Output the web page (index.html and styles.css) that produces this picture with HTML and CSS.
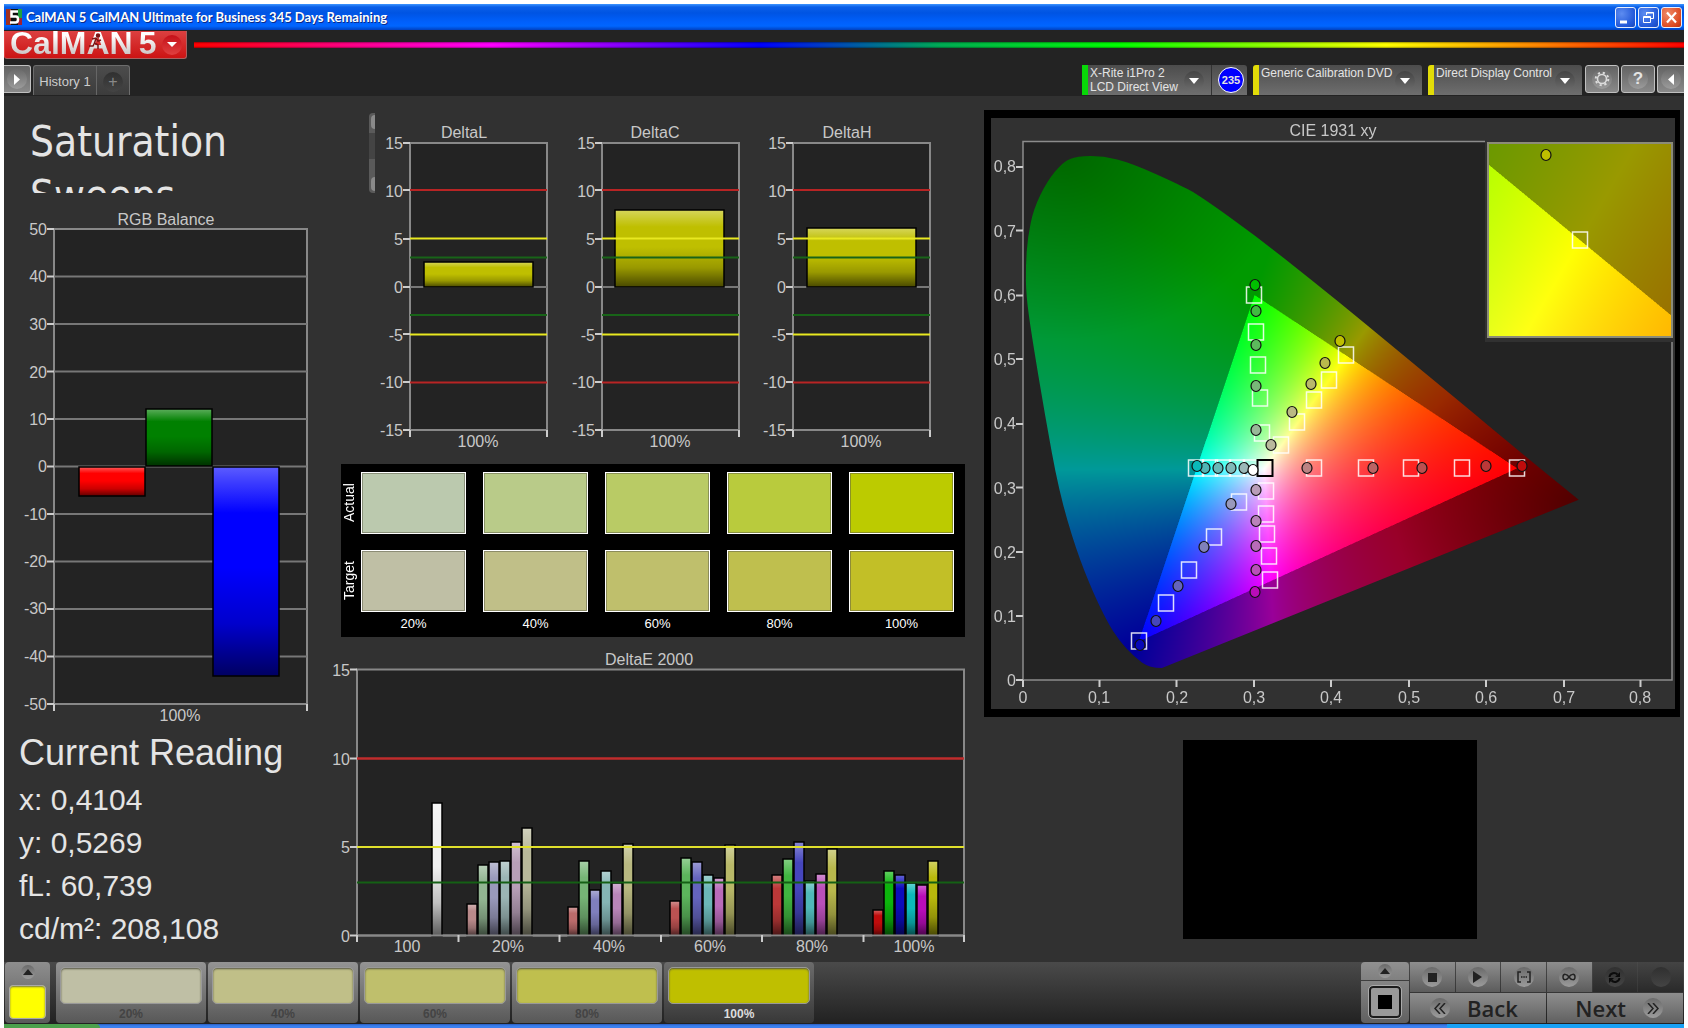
FILE: index.html
```html
<!DOCTYPE html>
<html lang="en">
<head>
<meta charset="utf-8">
<title>CalMAN 5</title>
<link rel="stylesheet" href="styles.css">
</head>
<body>
<header class="titlebar">
  <svg class="app-icon" width="16" height="16" viewBox="0 0 16 16" aria-hidden="true"><rect width="16" height="16" fill="#101010"/><path d="M0 0h5v16H0z" fill="#a03020"/><path d="M12 0h4v9h-4z" fill="#20a040"/><path d="M12 9h4v7h-4z" fill="#a02030"/><path d="M12 2.500H5.500v5H10q2 0 2 3T9.500 13.500H4" fill="none" stroke="#fff" stroke-width="2.500"/></svg>
  <h1 class="window-title">CalMAN 5 CalMAN Ultimate for Business 345 Days Remaining</h1>
  <div class="window-buttons">
    <button class="win-btn" aria-label="Minimize"><svg width="19" height="19" viewBox="0 0 19 19"><path d="M4 14h7" stroke="#fff" stroke-width="3"/></svg></button>
    <button class="win-btn" aria-label="Restore"><svg width="19" height="19" viewBox="0 0 19 19" fill="none" stroke="#fff"><path d="M7.500 7V4.500h7v6H12M7 5h8M4.500 8.500h7v6h-7zM4 9.500h8"/></svg></button>
    <button class="win-btn win-close" aria-label="Close"><svg width="19" height="19" viewBox="0 0 19 19"><path d="M5 4.500l9 10M14 4.500l-9 10" stroke="#fff" stroke-width="2.200"/></svg></button>
  </div>
</header>

<div class="ribbon">
  <div class="brand-row">
    <button class="logo" aria-label="CalMAN 5 menu">
      <span class="logo-text">CalMAN</span><span class="logo-text">5</span>
      <svg class="runner" width="14" height="17" viewBox="0 0 14 17" fill="none" stroke="#7c1414" stroke-width="1.500"><circle cx="9" cy="2.500" r="1.500" fill="#7c1414"/><path d="M3 6l4-1 2 3 3-1M7 5.500L5.500 10l3.500 2v4M5.500 10L4 13H0"/></svg>
      <span class="disc disc-red"><svg width="10" height="6"><path d="M0 0h10L5 5z" fill="#fff"/></svg></span>
    </button>
    <div class="rainbow"></div>
  </div>
  <div class="tab-row">
    <button class="tool tool-left" aria-label="Expand"><span class="disc"><svg width="6" height="11"><path d="M0 0v11l6-5.500z" fill="#fff"/></svg></span></button>
    <nav class="tabs">
      <button class="tab">History 1</button>
      <button class="tab tab-add" aria-label="New tab"><span class="disc disc-dark">+</span></button>
    </nav>
    <div class="devices">
      <div class="device meter">
        <button class="device-main green"><span class="device-name">X-Rite i1Pro 2<br>LCD Direct View</span><span class="disc disc-mid"><svg width="10" height="6"><path d="M0 0h10L5 6z" fill="#fff"/></svg></span></button>
        <button class="level">235</button>
      </div>
      <button class="device device-main source"><span class="device-name">Generic Calibration DVD</span><span class="disc disc-mid"><svg width="10" height="6"><path d="M0 0h10L5 6z" fill="#fff"/></svg></span></button>
      <button class="device device-main display"><span class="device-name">Direct Display Control</span><span class="disc disc-mid"><svg width="10" height="6"><path d="M0 0h10L5 6z" fill="#fff"/></svg></span></button>
      <button class="tool" aria-label="Settings"><span class="disc"><svg width="16" height="16" viewBox="0 0 16 16" fill="none" stroke="#ddd"><circle cx="8" cy="8" r="4.500" stroke-width="1.600"/><circle cx="8" cy="8" r="6.300" stroke-width="2" stroke-dasharray="2.200 2.748"/></svg></span></button>
      <button class="tool" aria-label="Help"><span class="disc help">?</span></button>
      <button class="tool tool-right" aria-label="Collapse"><span class="disc"><svg width="6" height="11"><path d="M6 0v11L0 5.500z" fill="#fff"/></svg></span></button>
    </div>
  </div>
</div>

<main class="workspace">
  <section class="col-left">
    <div class="notes">
      <h2 class="notes-title">Saturation<br>Sweeps</h2>
      <div class="notes-scroll"><i></i><i></i></div>
    </div>
    <svg class="chart rgb" viewBox="4 205 321 525" role="img" aria-label="RGB Balance">
      <defs>
        <linearGradient id="shade" x1="0" y1="0" x2="0" y2="1">
          <stop offset="0" stop-color="#fff" stop-opacity=".36"/><stop offset=".06" stop-color="#fff" stop-opacity=".26"/>
          <stop offset=".22" stop-color="#fff" stop-opacity="0"/><stop offset=".48" stop-color="#000" stop-opacity="0"/>
          <stop offset=".75" stop-color="#000" stop-opacity=".2"/><stop offset="1" stop-color="#000" stop-opacity=".62"/>
        </linearGradient>
      </defs>
      <text class="mid" x="166" y="225">RGB Balance</text>
      <rect class="plot" x="54" y="229" width="253" height="475"/>
      <path class="grid" d="M54 276.500h253M54 324h253M54 371.500h253M54 419h253M54 466.500h253M54 514h253M54 561.500h253M54 609h253M54 656.500h253"/>
      <path class="tick" d="M47 229h7M47 276.500h7M47 324h7M47 371.500h7M47 419h7M47 466.500h7M47 514h7M47 561.500h7M47 609h7M47 656.500h7M47 704h7M54 704v7M307 704v7"/>
      <g class="end"><text x="47" y="235">50</text><text x="47" y="282">40</text><text x="47" y="330">30</text><text x="47" y="378">20</text><text x="47" y="425">10</text><text x="47" y="472">0</text><text x="47" y="520">-10</text><text x="47" y="567">-20</text><text x="47" y="614">-30</text><text x="47" y="662">-40</text><text x="47" y="710">-50</text></g>
      <g id="rgb-bars"></g>
      <text class="mid" x="180" y="721">100%</text>
    </svg>
    <div class="reading">
      <h2>Current Reading</h2>
      <p>x: 0,4104</p>
      <p>y: 0,5269</p>
      <p>fL: 60,739</p>
      <p>cd/m²: 208,108</p>
    </div>
  </section>

  <section class="col-mid">
    <svg class="chart deltas" viewBox="325 113 640 345" role="img" aria-label="DeltaL, DeltaC and DeltaH">
      <defs>
        <g id="frame">
          <rect class="plot" x="410" y="143" width="137" height="287"/>
          <path class="grid" d="M410 287h137"/>
          <path class="tick" d="M403 143h7M403 190h7M403 239h7M403 287h7M403 334h7M403 382h7M403 430h7M410 430v7M547 430v7"/>
          <g class="end"><text x="403" y="149">15</text><text x="403" y="197">10</text><text x="403" y="245">5</text><text x="403" y="293">0</text><text x="403" y="341">-5</text><text x="403" y="388">-10</text><text x="403" y="436">-15</text></g>
          <text class="mid" x="478" y="447">100%</text>
        </g>
        <g id="limits" fill="none" stroke-width="2"><path d="M410 190h137M410 382.500h137" stroke="#b82424"/><path d="M410 238.500h137M410 334.500h137" stroke="#e8e820"/><path d="M410 257.500h137M410 315h137" stroke="#186418"/></g>
      </defs>
      <use href="#frame"/><use href="#frame" x="192"/><use href="#frame" x="383"/>
      <g id="delta-bars"></g>
      <use href="#limits"/><use href="#limits" x="192"/><use href="#limits" x="383"/>
      <text class="mid" x="464" y="138">DeltaL</text><text class="mid" x="655" y="138">DeltaC</text><text class="mid" x="847" y="138">DeltaH</text>
    </svg>

    <div class="swatches">
      <span class="row-name">Actual</span><i class="a20"></i><i class="a40"></i><i class="a60"></i><i class="a80"></i><i class="a100"></i>
      <span class="row-name">Target</span><i class="t20"></i><i class="t40"></i><i class="t60"></i><i class="t80"></i><i class="t100"></i>
      <b></b><b>20%</b><b>40%</b><b>60%</b><b>80%</b><b>100%</b>
    </div>

    <svg class="chart delta-e" viewBox="325 645 640 312" role="img" aria-label="DeltaE 2000">
      <text class="mid" x="649" y="665">DeltaE 2000</text>
      <rect class="plot" x="357" y="669.500" width="607" height="266"/>
      <g id="de-bars"></g>
      <path d="M357 935.500h607" stroke="#888" stroke-width="2"/>
      <path d="M357 758.500h607" stroke="#c02c2c" stroke-width="2.500"/><path d="M357 847h607" stroke="#e0e02c" stroke-width="2"/><path d="M357 882.500h607" stroke="#146014" stroke-width="2"/>
      <path class="tick" d="M350 669.500h7M350 758.500h7M350 847h7M350 935.500h7M357 935v7M458.500 935v7M559.500 935v7M661 935v7M762 935v7M863.500 935v7M964 935v7"/>
      <g class="end"><text x="350" y="676">15</text><text x="350" y="765">10</text><text x="350" y="853">5</text><text x="350" y="942">0</text></g>
      <g class="mid"><text x="407" y="952">100</text><text x="508" y="952">20%</text><text x="609" y="952">40%</text><text x="710" y="952">60%</text><text x="812" y="952">80%</text><text x="914" y="952">100%</text></g>
    </svg>
  </section>

  <section class="col-right">
    <div class="cie">
      <svg class="chart layer" viewBox="991 118 684 591" aria-hidden="true"><path d="M1023 141.500H1672V680H1023z" fill="#232323" stroke="#8c8c8c" stroke-width="1.500"/><path d="M1485 138h190v204h-190z" fill="#313131"/></svg>
      <canvas class="layer" id="gamut" width="684" height="591"></canvas>
      <svg class="chart layer" viewBox="991 118 684 591" role="img" aria-label="CIE 1931 xy">
        <text class="mid" x="1333" y="136">CIE 1931 xy</text>
        <rect x="1488" y="143" width="184" height="194" fill="none" stroke="#8c8c78" stroke-width="2"/>
        <path class="tick" d="M1016 167h7M1016 230.500h7M1016 295.500h7M1016 359h7M1016 424h7M1016 487.500h7M1016 552h7M1016 616h7M1016 680h7M1023 680v7M1099.500 680v7M1176.500 680v7M1254 680v7M1331 680v7M1409 680v7M1486 680v7M1564 680v7M1640.500 680v7"/>
        <g class="end"><text x="1016" y="172">0,8</text><text x="1016" y="237">0,7</text><text x="1016" y="301">0,6</text><text x="1016" y="365">0,5</text><text x="1016" y="429">0,4</text><text x="1016" y="494">0,3</text><text x="1016" y="558">0,2</text><text x="1016" y="622">0,1</text><text x="1016" y="686">0</text></g>
        <g class="mid"><text x="1023" y="703">0</text><text x="1099" y="703">0,1</text><text x="1177" y="703">0,2</text><text x="1254" y="703">0,3</text><text x="1331" y="703">0,4</text><text x="1409" y="703">0,5</text><text x="1486" y="703">0,6</text><text x="1564" y="703">0,7</text><text x="1640" y="703">0,8</text></g>
        <g id="targets" fill="none" stroke="#fff" stroke-opacity=".85" stroke-width="1.500"></g>
        <g id="readings" stroke="#111" stroke-width="1.200"></g>
      </svg>
    </div>
    <div class="preview"></div>
  </section>
</main>

<footer class="dock">
  <button class="chip" aria-label="Current colour"><span class="disc disc-small"><svg width="10" height="6"><path d="M0 6h10L5 0z" fill="#222"/></svg></span><span class="chip-color"></span></button>
  <div class="steps">
    <button class="step"><i class="s20"></i>20%</button>
    <button class="step"><i class="s40"></i>40%</button>
    <button class="step"><i class="s60"></i>60%</button>
    <button class="step"><i class="s80"></i>80%</button>
    <button class="step current"><i class="s100"></i>100%</button>
  </div>
  <div class="window-pick">
    <button class="pick-up" aria-label="Pattern options"><span class="disc disc-small"><svg width="10" height="6"><path d="M0 6h10L5 0z" fill="#222"/></svg></span></button>
    <button class="pick-main" aria-label="Pattern window"><i></i></button>
  </div>
  <div class="controls">
    <button class="ctl" aria-label="Stop"><span class="disc"><svg width="9" height="9"><path d="M0 0h9v9H0z" fill="#222"/></svg></span></button>
    <button class="ctl" aria-label="Play"><span class="disc"><svg width="9" height="12"><path d="M0 0v12l9-6z" fill="#222"/></svg></span></button>
    <button class="ctl" aria-label="Read series"><span class="disc"><svg width="14" height="12" fill="none" stroke="#222" stroke-width="1.500"><path d="M4 1H1v10h3M10 1h3v10h-3"/><path d="M4 6h6" stroke-dasharray="1.500 .8"/></svg></span></button>
    <button class="ctl" aria-label="Read continuous"><span class="disc"><svg width="14" height="8" fill="none" stroke="#222" stroke-width="1.500"><path d="M7 4C5 1 1 0 1 4s4 3 6 0 6-4 6 0-4 3-6 0z"/></svg></span></button>
    <button class="ctl off" aria-label="Refresh"><span class="disc disc-dark"><svg width="13" height="13" viewBox="0 0 13 13" fill="none" stroke="#0c0c0c" stroke-width="2"><path d="M1.500 6C2 2 7 1 9.500 3.500M11.500 7C11 11 6 12 3.500 9.500"/><path d="M12 1v5H7zM1 12V7h5z" fill="#0c0c0c" stroke="none"/></svg></span></button>
    <button class="ctl off" aria-label="Record"><span class="disc disc-dark"></span></button>
    <button class="nav back"><span class="disc"><svg width="12" height="11" fill="none" stroke="#222" stroke-width="1.500"><path d="M6 0L1 5.500 6 11M11 0L6 5.500 11 11"/></svg></span><span class="nav-text">Back</span></button>
    <button class="nav next"><span class="nav-text">Next</span><span class="disc"><svg width="12" height="11" fill="none" stroke="#222" stroke-width="1.500"><path d="M1 0l5 5.500L1 11M6 0l5 5.500L6 11"/></svg></span></button>
  </div>
</footer>
<div class="taskbar"><span class="start"></span><span class="tray"></span></div>
<script src="charts.js"></script>
</body>
</html>
```

FILE: styles.css
```css
* { box-sizing: border-box; }
body {
  margin: 0;
  padding: 4px 4px 0;
  min-height: 100vh;
  display: flex;
  flex-direction: column;
  background: #fff;
  color: #e4e4e4;
  font-family: "Liberation Sans", Arial, sans-serif;
  font-size: 12px;
}
h1, h2, p { margin: 0; font-weight: normal; }
button {
  margin: 0;
  padding: 0;
  border: 0;
  background: none;
  color: inherit;
  font: inherit;
  display: flex;
  align-items: center;
  justify-content: center;
}
svg { display: block; }

/* Window title */
.titlebar {
  display: flex;
  align-items: center;
  height: 26px;
  padding: 0 2px;
  background: linear-gradient(#3d95ff 0, #0a5fe8 3px, #0054e3 9px, #0060fc 18px, #0066ff 22px, #0040c0 26px);
}
.window-title {
  flex: 1;
  margin-left: 4px;
  font: bold 13px "Lato", sans-serif;
  color: #fff;
  text-shadow: 1px 1px 0 #0a2a88;
}
.window-buttons { display: flex; gap: 2px; }
.win-btn {
  width: 21px;
  height: 21px;
  border: 1px solid #e8eefc;
  border-radius: 3px;
  background: radial-gradient(circle at 30% 30%, #5d8cf0, #2258d8 70%, #1a48b8);
}
.win-close { background: radial-gradient(circle at 30% 30%, #f08a68, #dc4a22 70%, #b83010); }

/* Ribbon */
.ribbon { height: 66px; background: #232323; }
.brand-row { display: flex; align-items: flex-start; gap: 7px; height: 35px; padding-top: 1px; }
.logo {
  position: relative;
  width: 183px;
  height: 28px;
  flex: none;
  justify-content: flex-start;
  align-items: flex-start;
  gap: 6px;
  padding: 0 7px 0 5px;
  border: 1px solid #a86060;
  border-top: 0;
  border-left-color: #e04040;
  border-radius: 0 0 3px 3px;
  background: linear-gradient(#dc4040, #cc1414);
  overflow: hidden;
}
.logo-text {
  font-size: 32px;
  font-weight: bold;
  line-height: 25px;
  background: linear-gradient(#fff 20%, #c8c0c0);
  background-clip: text;
  color: transparent;
}
.runner { position: absolute; left: 84px; top: 2px; }
.disc {
  width: 20px;
  height: 20px;
  flex: none;
  display: flex;
  align-items: center;
  justify-content: center;
  border-radius: 50%;
  background: linear-gradient(#6a6a6a, #9c9c9c);
}
.disc-red { margin: 4px 0 0 auto; background: linear-gradient(#c41018, #e04040); }
.disc-dark { background: linear-gradient(#303030, #444); color: #888; font-size: 16px; }
.disc-mid { background: linear-gradient(#444, #6c6c6c); }
.disc-small { width: 14px; height: 14px; }
.rainbow {
  flex: 1;
  height: 6px;
  margin-top: 11px;
  background: linear-gradient(rgba(0,0,0,.4), transparent 30% 70%, rgba(0,0,0,.4)),
    linear-gradient(90deg, #f00, #f0f 20%, #00f 38%, #0a5 50%, #0f0 62%, #ff0 80%, #f80 90%, #f00);
}
.tab-row { display: flex; gap: 2px; height: 31px; }
.tool {
  width: 34px;
  height: 28px;
  border: 1px solid #c0c0c0;
  border-radius: 3px;
  background: linear-gradient(#636363, #8a8a8a);
}
.tool-left { width: 27px; border-left: 0; border-radius: 0 3px 3px 0; }
.tool-right { width: 27px; border-right: 0; border-radius: 3px 0 0 3px; }
.help { font-size: 17px; font-weight: bold; }
.tabs { display: flex; height: 30px; border: 1px solid #6c6c6c; border-bottom: 0; border-radius: 3px 3px 0 0; background: linear-gradient(#4c4c4c, #3c3c3c); }
.tab { width: 62px; padding-top: 2px; font-size: 13px; color: #ccc; }
.tab-add { width: 33px; border-left: 1px solid #666; }
.devices { display: flex; gap: 2px; margin-left: auto; }
.device { height: 30px; margin-right: 4px; border-radius: 3px 3px 0 0; background: linear-gradient(#4c4c4c, #6e6e6e); }
.meter { display: flex; width: 165px; }
.device-main { justify-content: flex-start; align-items: flex-start; border-left: 6px solid #e2dc08; padding: 1px 7px 0 2px; text-align: left; line-height: 14px; }
.device-main .disc { margin: 5px 0 0 auto; }
.green { width: 130px; height: 30px; border-color: #08d808; border-right: 1px solid #333; }
.level { width: 26px; height: 26px; margin: 2px 2px 0 6px; border: 1px solid #fff; border-radius: 50%; background: #00f; font-size: 11px; font-weight: bold; }
.source { width: 169px; }
.display { width: 154px; margin-right: 1px; }
.device-name { white-space: nowrap; }

/* Workspace */
.workspace {
  flex: 1;
  display: grid;
  grid-template-columns: 321fr 640fr 715fr;
  min-height: 866px;
  padding-right: 4px;
  background: #313131;
}
.col-left, .col-mid { padding-top: 17px; min-width: 0; }
.col-right { padding: 14px 0 0 19px; min-width: 0; }
.notes { display: flex; justify-content: space-between; height: 80px; margin-right: -50px; padding-left: 26px; overflow: hidden; }
.notes-title { padding-top: 2px; font-family: "DejaVu Sans Condensed", "DejaVu Sans", sans-serif; font-size: 42px; line-height: 54px; }
.notes-scroll { width: 6px; display: flex; flex-direction: column; justify-content: space-between; padding: 2px 0 2px 2px; border-radius: 4px 0 0 4px; background: linear-gradient(#5a5a5a 20px, #444 20px 46px, #5a5a5a 46px); }
.notes-scroll i { height: 14px; border-radius: 4px 0 0 4px; background: #8a8a8a; }
.chart { width: 100%; height: auto; fill: #c8c8c8; font-size: 16px; }
.rgb { margin-top: 12px; }
.plot { fill: #232323; stroke: #888; stroke-width: 2; }
.grid { fill: none; stroke: #777; stroke-width: 2; }
.tick { fill: none; stroke: #ccc; stroke-width: 2; }
.mid { text-anchor: middle; }
.end { text-anchor: end; }
.reading { padding-left: 15px; font-size: 30px; line-height: 43px; }
.reading h2 { margin-bottom: 2px; font-size: 36px; line-height: 46px; }

.swatches {
  display: grid;
  grid-template-columns: 20px repeat(4, 122fr) 116fr;
  grid-template-rows: 62px 62px 16px;
  row-gap: 16px;
  height: 173px;
  margin: 6px 0 8px 16px;
  padding-top: 8px;
  background: #000;
}
.swatches i { margin-right: 17px; border: 1px solid #fff; box-shadow: inset 0 0 0 1px rgba(90, 90, 70, .5); }
.swatches b { margin: -12px 17px 0 0; font-size: 13px; font-weight: normal; color: #fff; text-align: center; line-height: 16px; }
.swatches i:nth-child(6n), .swatches b:nth-child(6n) { margin-right: 11px; }
.row-name { writing-mode: vertical-rl; transform: rotate(180deg); text-align: center; font-size: 14px; line-height: 16px; color: #fff; }
.a20 { background: #bbc9ae; } .a40 { background: #b9cb89; } .a60 { background: #b9cb65; } .a80 { background: #b9cb3d; } .a100 { background: #bccb00; }
.t20 { background: #bfbfa5; } .t40 { background: #c0bf88; } .t60 { background: #bfbf6c; } .t80 { background: #bfbf4e; } .t100 { background: #c2bf27; }

.cie { display: grid; border: solid #000; border-width: 8px 5px 8px 7px; background: #313131; }
.layer { grid-area: 1 / 1; width: 100%; height: auto; }
.preview { width: 294px; height: 199px; margin: 23px 0 0 199px; background: #000; }

/* Dock */
.dock { display: flex; height: 62px; padding: 0 1px; background: linear-gradient(#4a4a4a, #222); border-bottom: 1px solid #222; }
.chip { width: 45px; flex-direction: column; justify-content: space-between; padding: 3px 4px 4px; border-radius: 4px; background: linear-gradient(#8e8e8e, #5a5a5a); }
.chip-color { width: 37px; height: 34px; border: 1px solid #aaa; border-radius: 4px; background: #ff0; box-shadow: inset 0 1px 2px #774; }
.steps { display: flex; gap: 2px; margin-left: 6px; }
.step { width: 150px; flex-direction: column; justify-content: flex-start; padding-top: 5px; border-radius: 4px; background: linear-gradient(#949494, #585858); font-weight: bold; color: #444; line-height: 18px; }
.step i { width: 142px; height: 38px; border: 1px solid #999; border-radius: 5px; margin-bottom: 1px; box-shadow: inset 0 1px 2px #554; }
.current { color: #ddd; background: linear-gradient(#6c6c6c, #383838); }
.s20 { background: #bfbfa5; } .s40 { background: #c0bf88; } .s60 { background: #bfbf6c; } .s80 { background: #bfbf4e; } .s100 { background: #bfbf00; }
.window-pick { width: 48px; margin-left: auto; display: flex; flex-direction: column; gap: 1px; }
.pick-up { height: 18px; border-radius: 4px 4px 0 0; background: linear-gradient(#909090, #808080); }
.pick-main { flex: 1; border-radius: 0 0 4px 4px; background: linear-gradient(#858585, #606060); }
.pick-main i { width: 32px; height: 32px; border: 2px solid #1c1c1c; outline: 1px solid #aaa; border-radius: 4px; background: linear-gradient(#000, #000) center / 14px 14px no-repeat, #999; }
.controls { display: grid; grid-template-columns: repeat(6, 1fr); grid-template-rows: 30px 30px; gap: 1px; width: 273px; margin-left: 1px; }
.ctl { background: linear-gradient(#8e8e8e, #5c5c5c); }
.off { background: linear-gradient(#444, #2a2a2a); }
.nav { grid-column: span 3; gap: 17px; padding: 0 20px; background: linear-gradient(#8e8e8e, #606060); color: #222; }
.back { justify-content: flex-start; }
.next { justify-content: flex-end; }
.nav-text { font: 600 22px/30px "Open Sans", sans-serif; }
.taskbar { display: flex; justify-content: space-between; height: 4px; background: linear-gradient(#2a5cc0, #3c81f0 2px); }
.start { width: 96px; background: #4ca04c; border-radius: 0 4px 0 0; }
.tray { width: 237px; background: #18a0f4; }
```

FILE: charts.js
```js
const NS = 'http://www.w3.org/2000/svg';
function add(parent, name, attrs) {
  const el = document.createElementNS(NS, name);
  for (const k in attrs) el.setAttribute(k, attrs[k]);
  parent.appendChild(el);
}
function bar(parent, x, top, w, bottom, color) {
  const box = { x, y: top, width: w, height: bottom - top };
  add(parent, 'rect', { ...box, fill: color });
  add(parent, 'rect', { ...box, fill: 'url(#shade)', stroke: '#000', 'stroke-width': 1.5 });
}
const $ = id => document.getElementById(id);

bar($('rgb-bars'), 79, 467, 66, 496, '#f00');
bar($('rgb-bars'), 146, 409, 66, 466, '#008000');
bar($('rgb-bars'), 213, 467, 66, 676, '#00f');

[[424, 262], [615, 210], [807, 228]].forEach(b => bar($('delta-bars'), b[0], b[1], 109, 287, '#bfbf00'));

const hues = [
  [467, [904, 865, 862, 861, 842, 828], ['#b98a8a', '#92b592', '#9999bb', '#9bb5b5', '#b79fb7', '#b8b89a']],
  [568, [907, 861, 890, 871, 883, 844], ['#bb6b6b', '#76b576', '#7f7fbd', '#85b5b5', '#b985b9', '#b8b880']],
  [670, [901, 858, 862, 875, 878, 845], ['#bb5252', '#5cb55c', '#6464bd', '#6bb7b7', '#b96bb9', '#b8b868']],
  [772, [875, 859, 842, 881, 874, 849], ['#bb3838', '#40b540', '#4646bd', '#50b9b9', '#b950b9', '#b8b84c']],
  [873, [910, 871, 875, 883, 885, 861], ['#bf0c0c', '#0cb50c', '#0c0cbd', '#0cb9b9', '#b90cb9', '#b8b80c']]
];
bar($('de-bars'), 432, 803, 10, 936, '#f0f0f0');
hues.forEach(([x, tops, colors]) => tops.forEach((t, i) => bar($('de-bars'), x + i * 11, t, 10, 936, colors[i])));

/* Chart coordinates of each target square and measured point */
const targets = [
  [1254, 295], [1256, 332], [1258, 365], [1260, 398], [1262, 433],
  [1346, 355], [1329, 380], [1314, 400], [1297, 422], [1281, 445],
  [1196, 468], [1210, 468], [1223, 468], [1237, 468], [1251, 468],
  [1314, 468], [1366, 468], [1411, 468], [1462, 468], [1517, 468],
  [1266, 491], [1266, 514], [1267, 534], [1269, 556], [1270, 580],
  [1239, 502], [1214, 537], [1189, 570], [1166, 603], [1139, 641], [1580, 240]
];
targets.forEach(([x, y]) => add($('targets'), 'rect', { x: x - 7.5, y: y - 8, width: 15, height: 16 }));
add($('targets'), 'rect', { x: 1257.5, y: 460, width: 15, height: 16, stroke: '#000', 'stroke-opacity': 1, 'stroke-width': 2 });
const readings = [
  [1255, 285, '#00bf00'], [1256, 311, '#40bb40'], [1256, 345, '#5cb95c'], [1256, 386, '#78b878'], [1256, 430, '#98b898'],
  [1340, 341, '#bfbf00'], [1325, 363, '#b9b94c'], [1311, 384, '#b9b96b'], [1292, 412, '#bab983'], [1271, 445, '#b9b99d'],
  [1205, 468, '#50b5b5'], [1197, 466, '#0ab8b8'], [1218, 468, '#68b8b8'], [1231, 468, '#80b8b8'], [1244, 468, '#9bb8b8'], [1253, 470, '#fff'],
  [1307, 468, '#bb8383'], [1373, 468, '#bb6464'], [1422, 468, '#bb5050'], [1486, 466, '#bb3838'], [1522, 466, '#bf0c0c'],
  [1256, 490, '#b99db9'], [1256, 521, '#b983b9'], [1256, 546, '#b96bb9'], [1256, 570, '#b950b9'], [1255, 592, '#b90cb9'],
  [1231, 504, '#9999bb'], [1204, 547, '#8080bb'], [1178, 586, '#6464bb'], [1156, 621, '#4646bb'], [1140, 645, '#0808b8'],
  [1546, 155, '#bfbf00']
];
readings.forEach(([cx, cy, fill]) => add($('readings'), 'ellipse', { cx, cy, rx: 5, ry: 5.5, fill }));

/* Chromaticity fill: full strength inside Rec. 709, dimmed outside it */
function colour(x, y) {
  if (y < 0.001) y = 0.001;
  const X = x / y, Z = (1 - x - y) / y;
  const lin = [3.2406 * X - 1.5372 - 0.4986 * Z, -0.9689 * X + 1.8758 + 0.0415 * Z, 0.0557 * X - 0.2040 + 1.0570 * Z];
  const max = Math.max(...lin);
  let k = 255;
  if (Math.min(...lin) < 0) {
    const g = Math.hypot(x - 0.05, y - 0.83), r = Math.hypot(x - 0.73, y - 0.27);
    k = 153 * Math.min(1, 0.66 + 0.34 * g / 0.3) * Math.min(1, 0.5 + 0.5 * r / 0.25);
  }
  return lin.map(v => k * Math.max(0, v) / max);
}
function paint(w, h, toXY) {
  const c = document.createElement('canvas');
  c.width = w; c.height = h;
  const g = c.getContext('2d'), img = g.createImageData(w, h);
  for (let j = 0; j < h; j++) for (let i = 0; i < w; i++) {
    const sum = [0, 0, 0];
    for (const a of [0.25, 0.75]) for (const b of [0.25, 0.75]) {
      const p = toXY(i + a, j + b), q = colour(p[0], p[1]);
      sum[0] += q[0]; sum[1] += q[1]; sum[2] += q[2];
    }
    const o = (j * w + i) * 4;
    img.data[o] = sum[0] / 4; img.data[o + 1] = sum[1] / 4; img.data[o + 2] = sum[2] / 4; img.data[o + 3] = 255;
  }
  g.putImageData(img, 0, 0);
  return c;
}
const locus = [[.18, .0187], [.164, .0187], [.144, .036], [.1241, .0620], [.1096, .0898], [.0913, .1347], [.0687, .2027], [.0464, .2950],
  [.0285, .4127], [.0110, .5384], [.004, .6], [.0035, .645], [.0060, .69], [.0139, .735], [.031, .777], [.052, .808], [.07, .8165], [.104, .8168],
  [.14, .806], [.2037, .7717], [.2296, .7543], [.3016, .6923], [.3731, .6245], [.4441, .5547], [.5125, .4866], [.5752, .4242], [.6270, .3725], [.6658, .3340], [.7198, .281]];
const ctx = $('gamut').getContext('2d');
const px = x => 32 + x * 772, py = y => 562 - y * 641.5;
ctx.save();
ctx.beginPath();
locus.forEach((p, i) => {
  const n = locus[(i + 1) % locus.length];
  if (i === 0 || i === locus.length - 1) ctx.lineTo(px(p[0]), py(p[1]));
  else ctx.quadraticCurveTo(px(p[0]), py(p[1]), px((p[0] + n[0]) / 2), py((p[1] + n[1]) / 2));
});
ctx.closePath();
ctx.clip();
ctx.drawImage(paint(684, 591, (i, j) => [(i - 32) / 772, (562 - j) / 641.5]), 0, 0);
ctx.restore();
ctx.drawImage(paint(184, 194, (i, j) => [0.4193 + (i - 92) / 3780, 0.5053 - (j - 97) / 3930]), 497, 25);
```
